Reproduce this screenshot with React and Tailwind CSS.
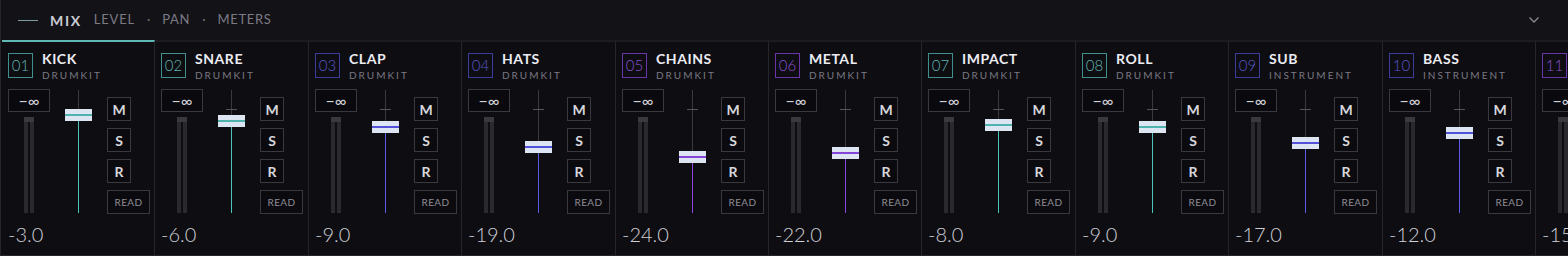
import React from "react";

const tones = {
  teal: {
    box: "border-[#3f8f8c] text-[#5fb8b4]",
    line: "bg-[#4fc4bd]",
    mark: "bg-[#4fb3ad]",
  },
  blue: {
    box: "border-[#3c3c9a] text-[#5656c8]",
    line: "bg-[#5a5ae6]",
    mark: "bg-[#5252d8]",
  },
  purple: {
    box: "border-[#6a35a8] text-[#8a4fd0]",
    line: "bg-[#8f45e6]",
    mark: "bg-[#8444d8]",
  },
};

const channels = [
  { num: "01", name: "KICK", kind: "DRUMKIT", tone: "teal", db: -3 },
  { num: "02", name: "SNARE", kind: "DRUMKIT", tone: "teal", db: -6 },
  { num: "03", name: "CLAP", kind: "DRUMKIT", tone: "blue", db: -9 },
  { num: "04", name: "HATS", kind: "DRUMKIT", tone: "blue", db: -19 },
  { num: "05", name: "CHAINS", kind: "DRUMKIT", tone: "purple", db: -24 },
  { num: "06", name: "METAL", kind: "DRUMKIT", tone: "purple", db: -22 },
  { num: "07", name: "IMPACT", kind: "DRUMKIT", tone: "teal", db: -8 },
  { num: "08", name: "ROLL", kind: "DRUMKIT", tone: "teal", db: -9 },
  { num: "09", name: "SUB", kind: "INSTRUMENT", tone: "blue", db: -17 },
  { num: "10", name: "BASS", kind: "INSTRUMENT", tone: "blue", db: -12 },
  { num: "11", name: "LEAD", kind: "INSTRUMENT", tone: "purple", db: -15 },
];

// strips are ~153.4px wide; alternate whole widths so 1px lines stay crisp
const wide = [false, true, false, true, false, false, true, false, true, false, false];

function SmallBtn({ label }) {
  return (
    <div className="w-[24px] h-[24px] border border-[#3a3940] bg-[#0b0a0e] flex items-center justify-center text-[14px] font-bold text-[#d6d6dc]">
      {label}
    </div>
  );
}

function Strip({ ch, selected, isWide }) {
  const t = tones[ch.tone];
  // handle center: 19px below track top at 0dB, 2px per dB
  const center = 19 + Math.abs(ch.db) * 2;
  return (
    <div
      className={`shrink-0 border-r border-r-[#26252b] border-t-2 flex flex-col pt-[11px] pl-[6px] ${
        isWide ? "w-[154px]" : "w-[153px]"
      } ${selected ? "border-t-[#5fb8b4]" : "border-t-[#1c1b21]"}`}
    >
      {/* title */}
      <div className="flex items-center gap-[9px] h-[25px]">
        <div className={`w-[25px] h-[25px] shrink-0 border flex items-center justify-center text-[15px] font-light ${t.box}`}>
          {ch.num}
        </div>
        <div className="flex flex-col leading-none whitespace-nowrap">
          <span className="text-[14px] font-bold tracking-[0.04em] text-[#ececf2]">{ch.name}</span>
          <span className="mt-[4px] text-[10px] tracking-[0.2em] text-[#7a7982]">{ch.kind}</span>
        </div>
      </div>

      {/* controls */}
      <div className="flex mt-[11px] h-[125px]">
        <div className="w-[42px] flex flex-col items-center shrink-0">
          <div className="w-[42px] h-[23px] border border-[#3a3940] bg-[#0a090d] flex items-center justify-center text-[16px] text-[#d2d2d8]">
            −∞
          </div>
          <div className="mt-[5px] w-[10px] flex flex-col">
            <div className="h-[5px] bg-[#3a393f]" />
            <div className="flex gap-[2px] h-[91px]">
              <div className="w-[4px] bg-[#2a292e]" />
              <div className="w-[4px] bg-[#2a292e]" />
            </div>
          </div>
        </div>

        <div className="relative ml-[15px] w-[27px] shrink-0">
          <div className="absolute left-[13px] top-[1px] w-px h-[123px] bg-[#3a393f]" />
          <div className="absolute left-[8px] top-[20px] w-[11px] h-px bg-[#55545b]" />
          <div
            className={`absolute left-[13px] w-px ${t.line}`}
            style={{ top: center + 1, height: 123 - center }}
          />
          <div
            className="absolute left-0 w-[27px] h-[12px] bg-[#dde5f2] flex flex-col justify-center"
            style={{ top: center - 5 }}
          >
            <div className={`h-[2px] ${t.mark}`} />
          </div>
        </div>

        <div className="ml-[15px] mt-[8px] flex flex-col gap-[7px] shrink-0">
          <SmallBtn label="M" />
          <SmallBtn label="S" />
          <SmallBtn label="R" />
          <div className="w-[43px] h-[24px] border border-[#3a3940] bg-[#0b0a0e] flex items-center justify-center text-[10px] tracking-[0.04em] text-[#8e8d96]">
            READ
          </div>
        </div>
      </div>

      <div className="mt-[9px] text-[20px] font-light leading-[22px] text-[#cfcfd6] whitespace-nowrap">
        {ch.db.toFixed(1)}
      </div>
    </div>
  );
}

export default function App() {
  return (
    <div
      className="w-[1568px] h-[256px] overflow-hidden bg-[#0e0d12] flex flex-col"
      style={{ fontFamily: "Lato, 'Noto Sans', sans-serif" }}
    >
      <div className="h-[40px] shrink-0 bg-[#131217] border-l border-[#26252b] flex items-center pl-[17px] pr-[28px]">
        <div className="w-[20px] h-px bg-[#7b9a9f]" />
        <span className="ml-[12px] text-[14px] font-bold tracking-[0.12em] text-[#cacad2]">MIX</span>
        <span className="ml-[12px] text-[13px] tracking-[0.06em] text-[#7c7b85]">LEVEL</span>
        <span className="ml-[12px] text-[13px] text-[#6c6b74]">·</span>
        <span className="ml-[12px] text-[13px] tracking-[0.05em] text-[#7c7b85]">PAN</span>
        <span className="ml-[12px] text-[13px] text-[#6c6b74]">·</span>
        <span className="ml-[12px] text-[13px] tracking-[0.05em] text-[#7c7b85]">METERS</span>
        <svg className="ml-auto" width="12" height="8" viewBox="0 0 12 8" fill="none">
          <path d="M1.5 1.5 L6 6 L10.5 1.5" stroke="#8a8992" strokeWidth="1.3" />
        </svg>
      </div>
      <div className="flex flex-1 border-l border-[#26252b] pl-px border-b border-b-[#26252b]">
        {channels.map((ch, i) => (
          <Strip key={ch.num} ch={ch} selected={i === 0} isWide={wide[i]} />
        ))}
      </div>
    </div>
  );
}
